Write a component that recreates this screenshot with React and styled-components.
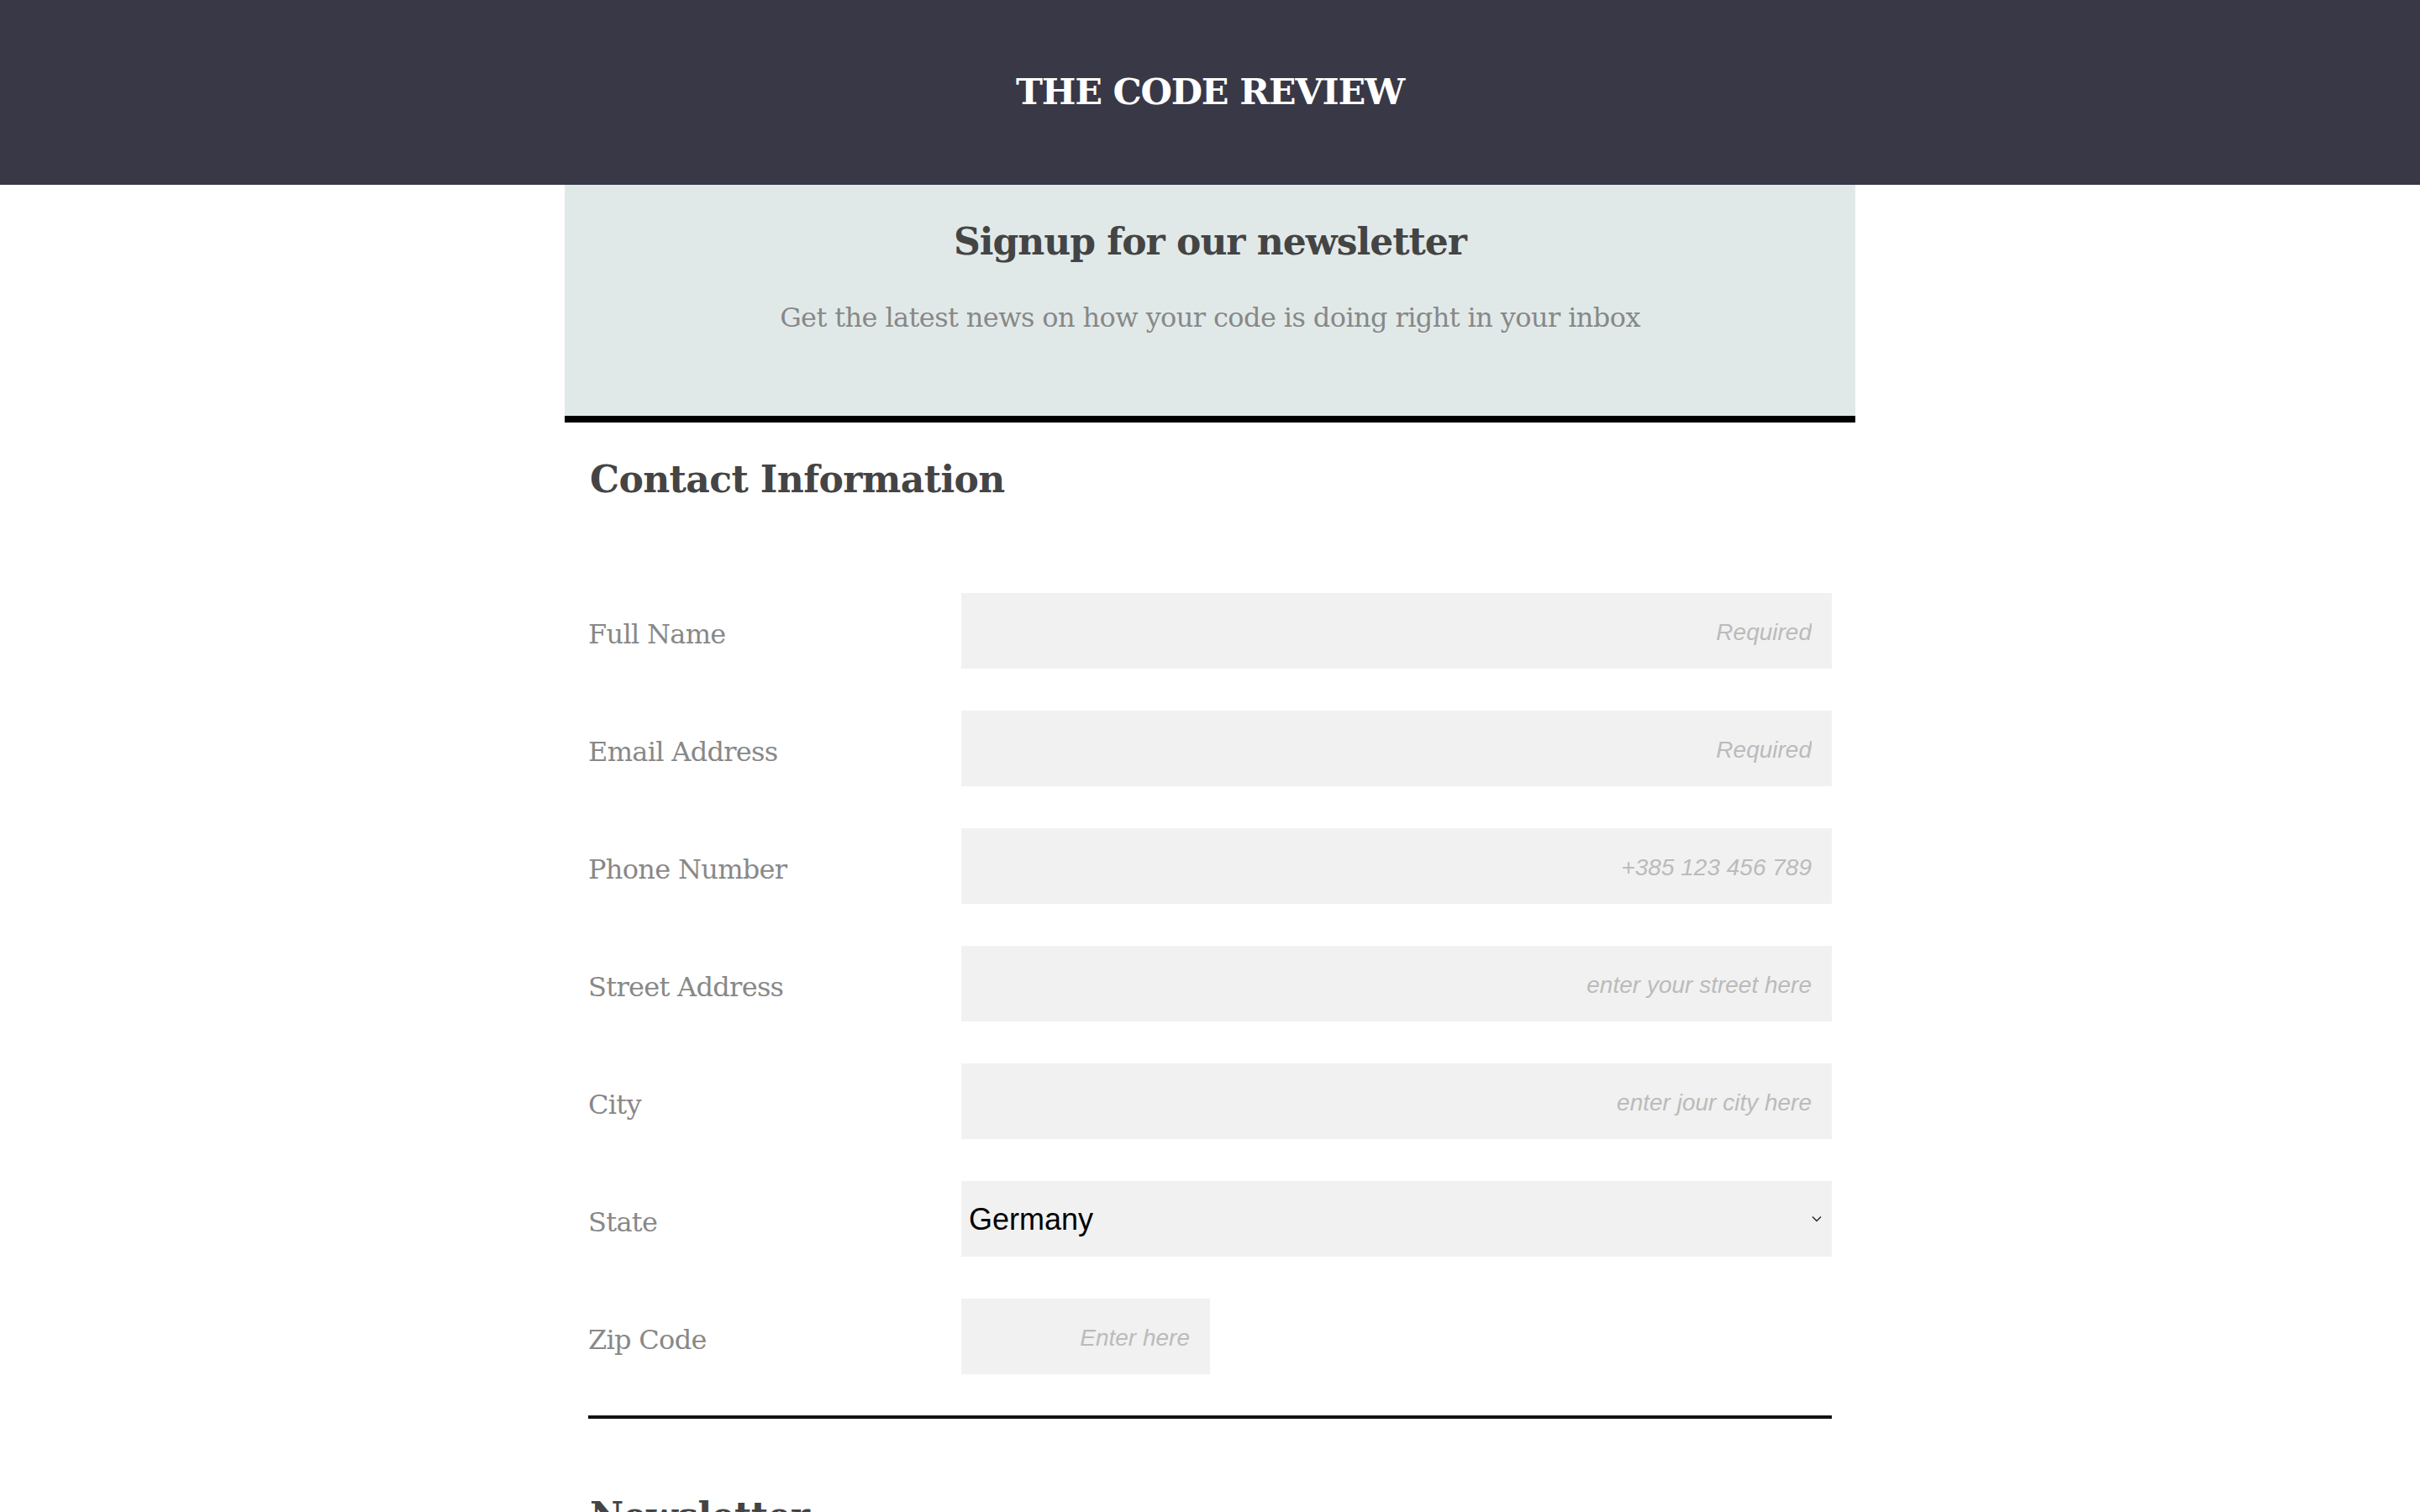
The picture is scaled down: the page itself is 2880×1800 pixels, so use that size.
import React from "react";
import styled, { createGlobalStyle } from "styled-components";

const GlobalStyle = createGlobalStyle`
  html, body { margin: 0; padding: 0; background: #ffffff; }
  body { font-family: "DejaVu Serif", serif; }
  * { box-sizing: border-box; }
`;

const Header = styled.header`
  height: 220px;
  background: #393846;
  display: flex;
  align-items: center;
  justify-content: center;
`;

const SiteTitle = styled.h1`
  margin: 0 0 2px;
  font-family: "DejaVu Serif", serif;
  font-weight: 700;
  font-size: 43px;
  letter-spacing: -1.2px;
  color: #ffffff;
`;

const Main = styled.main`
  width: 1536px;
  margin: 0 auto;
`;

const Banner = styled.section`
  height: 283px;
  background: #e1e9e8;
  border-bottom: 8px solid #000000;
  display: flex;
  flex-direction: column;
  align-items: center;
  padding-top: 40px;
`;

const BannerTitle = styled.h2`
  margin: 0;
  font-family: "DejaVu Serif", serif;
  font-weight: 700;
  font-size: 44px;
  letter-spacing: -1px;
  line-height: 56px;
  color: #444444;
`;

const BannerText = styled.p`
  margin: 44px 0 0;
  font-family: "DejaVu Serif", serif;
  font-size: 32px;
  letter-spacing: -0.6px;
  line-height: 36px;
  color: #888888;
`;

const Form = styled.form`
  padding: 0 28px;
`;

const SectionTitle = styled.h2`
  margin: 0;
  padding: 40px 0 0 2px;
  height: 203px;
  font-family: "DejaVu Serif", serif;
  font-weight: 700;
  font-size: 44px;
  letter-spacing: -0.6px;
  line-height: 56px;
  color: #444444;
`;

const Fields = styled.div`
  display: flex;
  flex-direction: column;
  gap: 50px;
  padding-bottom: 49px;
  border-bottom: 4px solid #111111;
`;

const Row = styled.div`
  display: grid;
  grid-template-columns: 444px 1fr;
  align-items: center;
  height: 90px;
`;

const Label = styled.label`
  font-family: "DejaVu Serif", serif;
  font-size: 32px;
  letter-spacing: -0.7px;
  color: #888888;
  padding-top: 8px;
`;

const Input = styled.input`
  width: ${(p) => p.$width || "100%"};
  height: 90px;
  border: none;
  outline: none;
  background: #f1f1f1;
  padding: 4px 24px 0;
  text-align: right;
  font-family: "Liberation Sans", Arial, sans-serif;
  font-size: 28px;
  color: #333;
  &::placeholder {
    color: #bbbbbb;
    font-style: italic;
  }
`;

const SelectWrap = styled.div`
  position: relative;
  height: 90px;
`;

const Select = styled.select`
  width: 100%;
  height: 90px;
  border: none;
  outline: none;
  background: #f1f1f1;
  padding: 0 40px 0 9px;
  appearance: none;
  -webkit-appearance: none;
  font-family: "Liberation Sans", Arial, sans-serif;
  font-size: 36px;
  color: #000000;
`;

const Chevron = styled.svg`
  position: absolute;
  right: 12px;
  top: 41px;
  width: 12px;
  height: 8px;
  pointer-events: none;
`;

const NextTitle = styled.h2`
  margin: 0;
  padding: 88px 0 0 2px;
  font-family: "DejaVu Serif", serif;
  font-weight: 700;
  font-size: 44px;
  letter-spacing: -0.6px;
  line-height: 56px;
  color: #444444;
`;

const fields = [
  { label: "Full Name", placeholder: "Required" },
  { label: "Email Address", placeholder: "Required" },
  { label: "Phone Number", placeholder: "+385 123 456 789" },
  { label: "Street Address", placeholder: "enter your street here" },
  { label: "City", placeholder: "enter jour city here" },
];

export default function App() {
  return (
    <>
      <GlobalStyle />
      <Header>
        <SiteTitle>THE CODE REVIEW</SiteTitle>
      </Header>
      <Main>
        <Banner>
          <BannerTitle>Signup for our newsletter</BannerTitle>
          <BannerText>Get the latest news on how your code is doing right in your inbox</BannerText>
        </Banner>
        <Form onSubmit={(e) => e.preventDefault()}>
          <SectionTitle>Contact Information</SectionTitle>
          <Fields>
            {fields.map((f) => (
              <Row key={f.label}>
                <Label>{f.label}</Label>
                <Input placeholder={f.placeholder} />
              </Row>
            ))}
            <Row>
              <Label>State</Label>
              <SelectWrap>
                <Select defaultValue="Germany">
                  <option>Germany</option>
                  <option>Croatia</option>
                  <option>Austria</option>
                </Select>
                <Chevron viewBox="0 0 12 8">
                  <path d="M1 1.5 L6 6.5 L11 1.5" fill="none" stroke="#222" strokeWidth="1.4" />
                </Chevron>
              </SelectWrap>
            </Row>
            <Row>
              <Label>Zip Code</Label>
              <Input $width="296px" placeholder="Enter here" />
            </Row>
          </Fields>
          <NextTitle>Newsletter</NextTitle>
        </Form>
      </Main>
    </>
  );
}
